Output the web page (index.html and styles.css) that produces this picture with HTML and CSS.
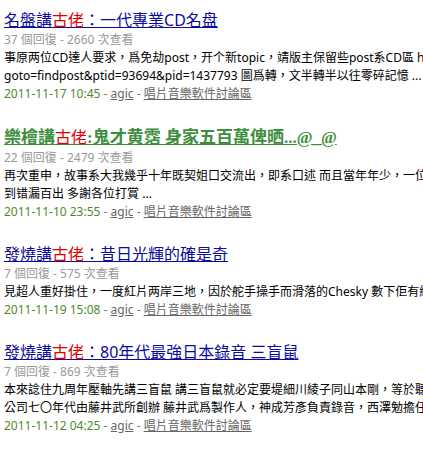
FILE: index.html
```html
<!DOCTYPE html>
<html>
<head>
<meta charset="utf-8">
<link rel="stylesheet" href="styles.css">
</head>
<body>
<ul class="results">
  <li class="item">
    <h3 class="title"><a href="#">名盤講<span class="hl">古佬</span>：一代專業CD名盘</a></h3>
    <p class="meta">37 個回復 - 2660 次查看</p>
    <p class="body">事原两位CD達人要求，爲免劫post，开个新topic，靖版主保留些post系CD區 http://www.hkaudiophile.com/redirect.php?<br>goto=findpost&amp;ptid=93694&amp;pid=1437793 圖爲轉，文半轉半以往零碎記憶 ...</p>
    <p class="info"><span class="date">2011-11-17 10:45</span> - <a href="#">agic</a> - <a href="#">唱片音樂軟件討論區</a></p>
  </li>
  <li class="item">
    <h3 class="title special"><a href="#">樂檜講<span class="hl">古佬</span>:鬼才黄霑 身家五百萬俾晒...@_@</a></h3>
    <p class="meta">22 個回復 - 2479 次查看</p>
    <p class="body">再次重申，故事系大我幾乎十年既契姐口交流出，即系口述 而且當年年少，一位前輩講過嘅嘢都唔記得晒，所以或者會<br>到错漏百出 多謝各位打賞 ...</p>
    <p class="info"><span class="date">2011-11-10 23:55</span> - <a href="#">agic</a> - <a href="#">唱片音樂軟件討論區</a></p>
  </li>
  <li class="item">
    <h3 class="title"><a href="#">發燒講<span class="hl">古佬</span>：昔日光輝的確是奇</a></h3>
    <p class="meta">7 個回復 - 575 次查看</p>
    <p class="body">見超人重好掛住，一度紅片两岸三地，因於舵手操手而滑落的Chesky 數下佢有緣份的錄音 ...</p>
    <p class="info"><span class="date">2011-11-19 15:08</span> - <a href="#">agic</a> - <a href="#">唱片音樂軟件討論區</a></p>
  </li>
  <li class="item">
    <h3 class="title"><a href="#">發燒講<span class="hl">古佬</span>：80年代最強日本錄音 三盲鼠</a></h3>
    <p class="meta">7 個回復 - 869 次查看</p>
    <p class="body">本來諗住九周年壓軸先講三盲鼠 講三盲鼠就必定要堤細川綾子同山本剛，等於聽三盲鼠，三盲鼠唱片<br>公司七〇年代由藤井武所創辦 藤井武爲製作人，神成芳彥負責錄音，西澤勉擔任 ...</p>
    <p class="info"><span class="date">2011-11-12 04:25</span> - <a href="#">agic</a> - <a href="#">唱片音樂軟件討論區</a></p>
  </li>
</ul>
</body>
</html>
```

FILE: styles.css
```css
html, body {
  margin: 0;
  padding: 0;
  background: #ffffff;
  overflow: hidden;
}
body {
  font-family: "Noto Sans", "Noto Sans CJK TC", sans-serif;
  font-size: 12px;
  color: #000;
}
.results {
  list-style: none;
  margin: 0;
  padding: 9px 0 0 4px;
  width: 1000px;
}
.item {
  margin: 0 0 22px 0;
}
.title {
  margin: 0;
  font-size: 16px;
  font-weight: normal;
  line-height: 22px;
  white-space: nowrap;
}
.title a {
  color: #0b0b9e;
  text-decoration: underline;
}
.title .hl {
  color: #e00000;
}
.title.special {
  font-family: "Liberation Serif", "Noto Sans CJK TC", serif;
  font-weight: bold;
  font-size: 17px;
}
.title.special a {
  color: #3d8f3d;
}
.title.special .hl {
  font-weight: normal;
  font-family: "Noto Sans CJK TC", sans-serif;
  font-size: 16px;
}
.meta {
  margin: 0;
  line-height: 18px;
  color: #9a9a9a;
  white-space: nowrap;
}
.body {
  margin: 0;
  line-height: 18px;
  white-space: nowrap;
}
.info {
  margin: 0;
  line-height: 18px;
  color: #777;
  white-space: nowrap;
}
.info .date {
  color: #4f8a2a;
}
.info a {
  color: #666;
  text-decoration: underline;
}
```
